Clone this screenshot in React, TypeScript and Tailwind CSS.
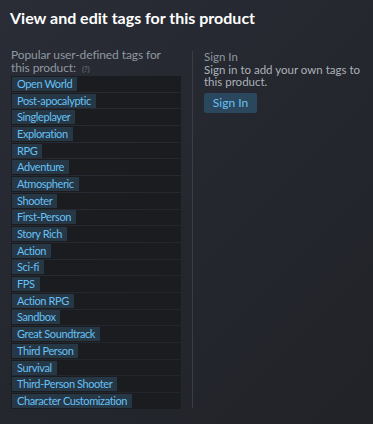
const tags = [
  "Open World",
  "Post-apocalyptic",
  "Singleplayer",
  "Exploration",
  "RPG",
  "Adventure",
  "Atmospheric",
  "Shooter",
  "First-Person",
  "Story Rich",
  "Action",
  "Sci-fi",
  "FPS",
  "Action RPG",
  "Sandbox",
  "Great Soundtrack",
  "Third Person",
  "Survival",
  "Third-Person Shooter",
  "Character Customization",
];

export default function App() {
  return (
    <div
      className="w-[373px] h-[424px] overflow-hidden bg-[linear-gradient(135deg,#2a2d36_0%,#24272e_50%,#212328_100%)] text-[#acb2b8]"
      style={{ fontFamily: 'Lato, "Open Sans", Arial, sans-serif' }}
    >
      <h2 className="pl-[10px] pt-[8px] text-[16px] leading-[20px] font-bold text-white">
        View and edit tags for this product
      </h2>

      <div className="flex mt-[19px]">
        {/* popular tags */}
        <div className="w-[170px] ml-[11px]">
          <div className="w-[160px] text-[12px] leading-[13px] tracking-[-0.1px] text-[#8f98a0] pt-[1px]">
            Popular user-defined tags for this product:{" "}
            <span className="text-[8px] text-[#6b7379] ml-[3px]">(?)</span>
          </div>
          <div className="flex flex-col gap-px">
            {tags.map((t) => (
              <div key={t} className="h-[15.7px] bg-[#1b1c20] flex items-center">
                <span className="ml-[1px] h-[14px] flex items-center px-[5px] bg-[#263746] text-[#67c1f5] text-[11px] tracking-[-0.4px] leading-[14px] whitespace-nowrap">
                  {t}
                </span>
              </div>
            ))}
          </div>
        </div>

        {/* divider */}
        <div className="ml-[11px] mt-[4px] w-px h-[357px] bg-[#3a3d44]" />

        {/* sign in */}
        <div className="ml-[11px] w-[165px] pt-[4px] text-[11.5px] leading-[12px]">
          <div className="text-[#8f98a0]">Sign In</div>
          <div className="text-[#acb2b8] mt-[1px]">
            Sign in to add your own tags to this product.
          </div>
          <button className="mt-[5px] h-[20px] w-[53px] rounded-[2px] bg-[#2a475e] text-[#67c1f5] text-[12px] leading-[20px]">
            Sign In
          </button>
        </div>
      </div>
    </div>
  );
}
